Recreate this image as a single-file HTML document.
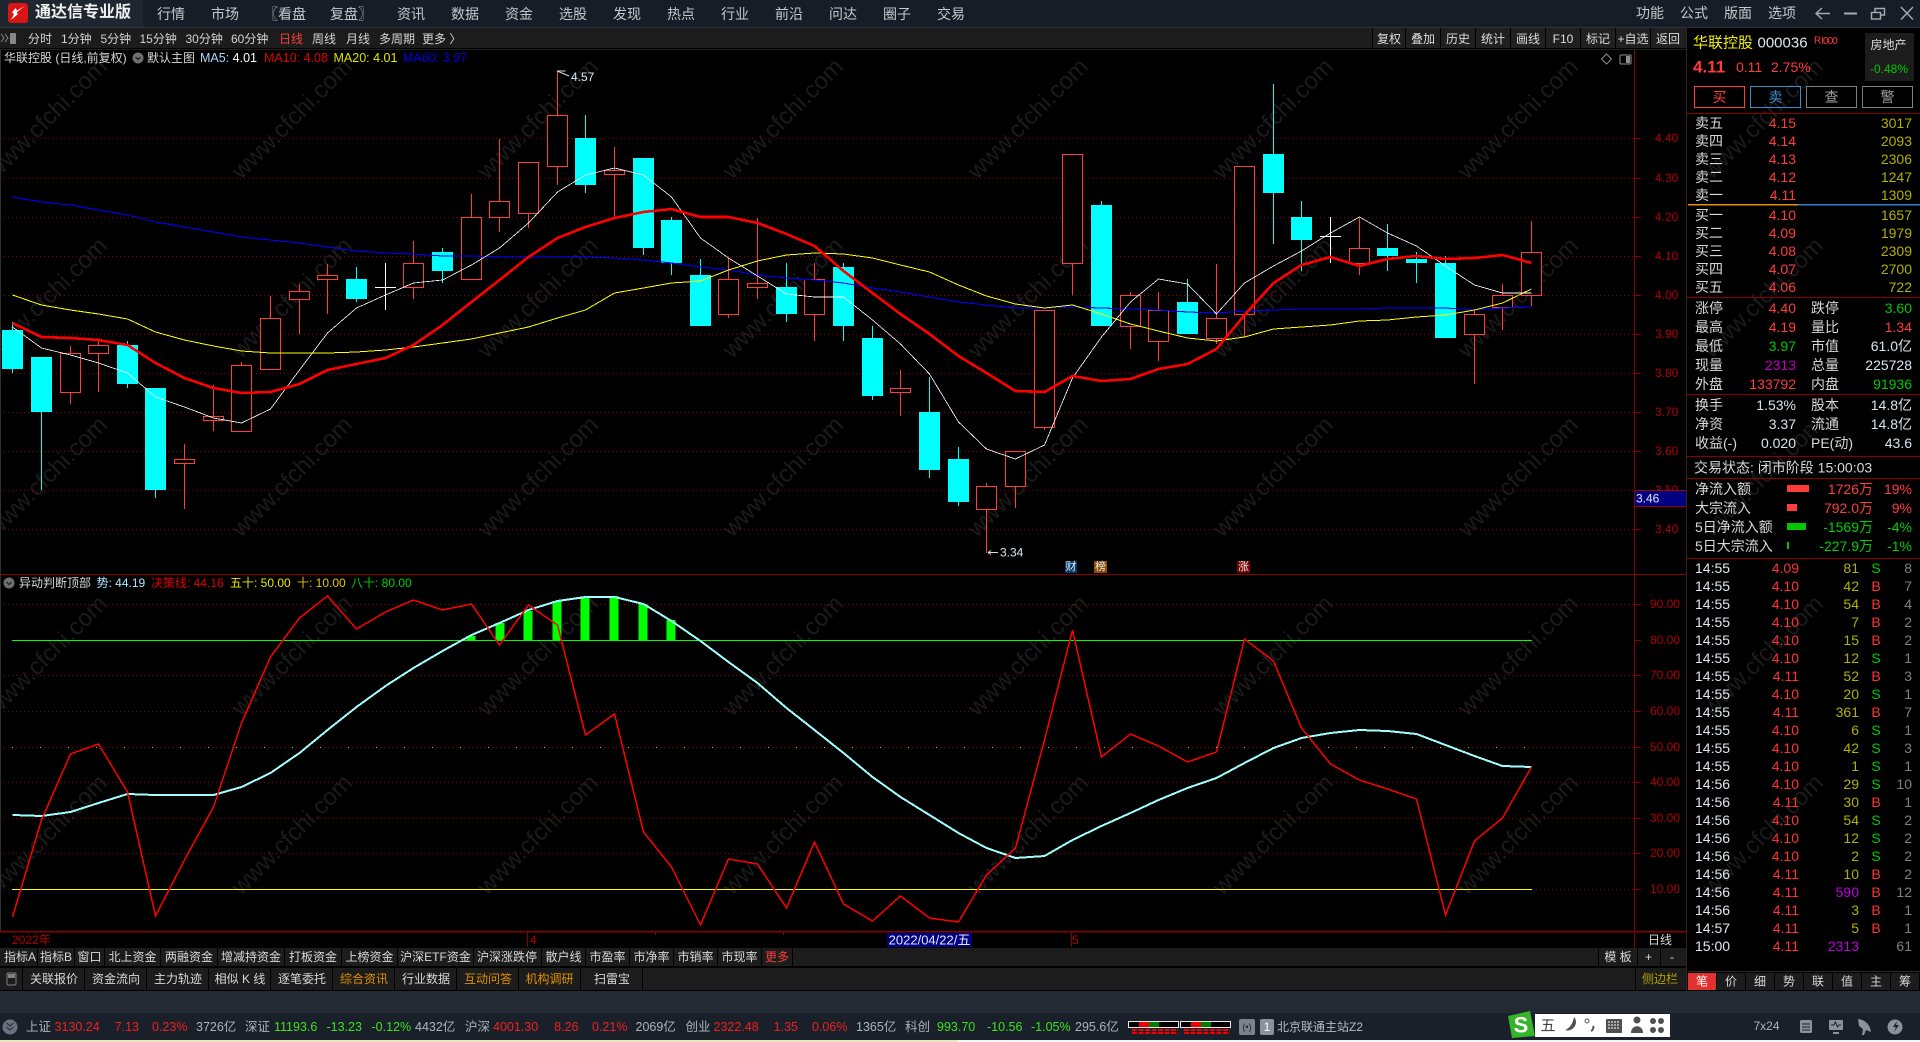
<!DOCTYPE html>
<html lang="zh-CN"><head><meta charset="utf-8"><title>通达信专业版</title>
<style>
html,body{margin:0;padding:0;background:#000;width:1920px;height:1042px;overflow:hidden}
svg{display:block;font-family:"Liberation Sans","Noto Sans CJK SC",sans-serif;font-size:12px}
text{dominant-baseline:central;white-space:pre}
.c{text-anchor:middle}.e{text-anchor:end}
.m text{font-size:14px;fill:#c4c8cc}
.n{fill:none}
.cr{shape-rendering:crispEdges}
</style></head><body>
<svg width="1920" height="1042" viewBox="0 0 1920 1042" xmlns="http://www.w3.org/2000/svg">
<rect width="1920" height="1042" fill="#000"/>

<!-- watermark -->
<g fill="#1b1b1b" font-size="24">
<g id="wm">
<text transform="translate(-9 175) rotate(-45)">www.cfchi.com</text><text transform="translate(236 175) rotate(-45)">www.cfchi.com</text><text transform="translate(482 175) rotate(-45)">www.cfchi.com</text><text transform="translate(727 175) rotate(-45)">www.cfchi.com</text><text transform="translate(972 175) rotate(-45)">www.cfchi.com</text><text transform="translate(1217 175) rotate(-45)">www.cfchi.com</text><text transform="translate(1462 175) rotate(-45)">www.cfchi.com</text><text transform="translate(1707 175) rotate(-45)">www.cfchi.com</text>
<text transform="translate(-9 354) rotate(-45)">www.cfchi.com</text><text transform="translate(236 354) rotate(-45)">www.cfchi.com</text><text transform="translate(482 354) rotate(-45)">www.cfchi.com</text><text transform="translate(727 354) rotate(-45)">www.cfchi.com</text><text transform="translate(972 354) rotate(-45)">www.cfchi.com</text><text transform="translate(1217 354) rotate(-45)">www.cfchi.com</text><text transform="translate(1462 354) rotate(-45)">www.cfchi.com</text><text transform="translate(1707 354) rotate(-45)">www.cfchi.com</text>
<text transform="translate(-9 533) rotate(-45)">www.cfchi.com</text><text transform="translate(236 533) rotate(-45)">www.cfchi.com</text><text transform="translate(482 533) rotate(-45)">www.cfchi.com</text><text transform="translate(727 533) rotate(-45)">www.cfchi.com</text><text transform="translate(972 533) rotate(-45)">www.cfchi.com</text><text transform="translate(1217 533) rotate(-45)">www.cfchi.com</text><text transform="translate(1462 533) rotate(-45)">www.cfchi.com</text><text transform="translate(1707 533) rotate(-45)">www.cfchi.com</text>
<text transform="translate(-9 712) rotate(-45)">www.cfchi.com</text><text transform="translate(236 712) rotate(-45)">www.cfchi.com</text><text transform="translate(482 712) rotate(-45)">www.cfchi.com</text><text transform="translate(727 712) rotate(-45)">www.cfchi.com</text><text transform="translate(972 712) rotate(-45)">www.cfchi.com</text><text transform="translate(1217 712) rotate(-45)">www.cfchi.com</text><text transform="translate(1462 712) rotate(-45)">www.cfchi.com</text><text transform="translate(1707 712) rotate(-45)">www.cfchi.com</text>
<text transform="translate(-9 891) rotate(-45)">www.cfchi.com</text><text transform="translate(236 891) rotate(-45)">www.cfchi.com</text><text transform="translate(482 891) rotate(-45)">www.cfchi.com</text><text transform="translate(727 891) rotate(-45)">www.cfchi.com</text><text transform="translate(972 891) rotate(-45)">www.cfchi.com</text><text transform="translate(1217 891) rotate(-45)">www.cfchi.com</text><text transform="translate(1462 891) rotate(-45)">www.cfchi.com</text><text transform="translate(1707 891) rotate(-45)">www.cfchi.com</text>
</g></g>

<!-- grid main -->
<g class="cr">
<path d="M0 138.5H1634M0 178.5H1634M0 217.5H1634M0 256.5H1634M0 295.5H1634M0 334.5H1634M0 373.5H1634M0 412.5H1634M0 451.5H1634M0 490.5H1634M0 529.5H1634" stroke="#8a0000" stroke-dasharray="1 3" fill="none"/>
<path d="M0 604.5H1634M0 675.5H1634M0 711.5H1634M0 747.5H1634M0 782.5H1634M0 818.5H1634M0 853.5H1634M0 889.5H1634" stroke="#8a0000" stroke-dasharray="1 3" fill="none"/>
<path d="M0.5 50V932" stroke="#303030"/>
<path d="M1634.5 50V948" stroke="#8a0000" fill="none"/>
<path d="M1634 138.5h7M1634 178.5h7M1634 217.5h7M1634 256.5h7M1634 295.5h7M1634 334.5h7M1634 373.5h7M1634 412.5h7M1634 451.5h7M1634 490.5h7M1634 529.5h7M1634 604.5h7M1634 640.5h7M1634 675.5h7M1634 711.5h7M1634 747.5h7M1634 782.5h7M1634 818.5h7M1634 853.5h7M1634 889.5h7" stroke="#8a0000"/>
</g>

<!-- candles red -->
<g stroke="#ff3c3c" fill="#000" class="cr">
<path d="M70.5 346V404"/><rect x="60.5" y="353.5" width="20" height="39"/>
<path d="M98.5 340V392"/><rect x="88.5" y="345.5" width="20" height="8"/>
<path d="M184.5 444V509"/><rect x="174.5" y="459.5" width="20" height="4"/>
<path d="M213.5 385V431"/><rect x="203.5" y="416.5" width="20" height="4"/>
<path d="M241.5 362V432"/><rect x="231.5" y="365.5" width="20" height="66"/>
<path d="M270.5 296V370"/><rect x="260.5" y="318.5" width="20" height="51"/>
<path d="M299.5 284V334"/><rect x="289.5" y="291.5" width="20" height="8"/>
<path d="M327.5 264V314"/><rect x="317.5" y="275.5" width="20" height="4"/>
<path d="M413.5 241V299"/><rect x="403.5" y="263.5" width="20" height="24"/>
<path d="M471.5 194V280"/><rect x="461.5" y="217.5" width="20" height="62"/>
<path d="M499.5 139V232"/><rect x="489.5" y="201.5" width="20" height="16"/>
<path d="M528.5 162V228"/><rect x="518.5" y="162.5" width="20" height="51"/>
<path d="M557.5 71V185"/><rect x="547.5" y="115.5" width="20" height="51"/>
<path d="M614.5 147V217"/><rect x="604.5" y="170.5" width="20" height="4"/>
<path d="M728.5 258V318"/><rect x="718.5" y="279.5" width="20" height="35"/>
<path d="M757.5 218V299"/><rect x="747.5" y="283.5" width="20" height="4"/>
<path d="M814.5 263V341"/><rect x="804.5" y="279.5" width="20" height="35"/>
<path d="M900.5 370V416"/><rect x="890.5" y="388.5" width="20" height="4"/>
<path d="M986.5 483V553"/><rect x="976.5" y="486.5" width="20" height="23"/>
<path d="M1015.5 451V508"/><rect x="1005.5" y="451.5" width="20" height="35"/>
<path d="M1044.5 310V430"/><rect x="1034.5" y="310.5" width="20" height="117"/>
<path d="M1072.5 155V295"/><rect x="1062.5" y="154.5" width="20" height="109"/>
<path d="M1130.5 292V349"/><rect x="1120.5" y="295.5" width="20" height="31"/>
<path d="M1158.5 292V361"/><rect x="1148.5" y="310.5" width="20" height="31"/>
<path d="M1216.5 264V344"/><rect x="1206.5" y="318.5" width="20" height="20"/>
<path d="M1244.5 166V337"/><rect x="1234.5" y="166.5" width="20" height="148"/>
<path d="M1359.5 218V275"/><rect x="1349.5" y="248.5" width="20" height="15"/>
<path d="M1474.5 310V384"/><rect x="1464.5" y="314.5" width="20" height="20"/>
<path d="M1502.5 284V330"/><rect x="1492.5" y="295.5" width="20" height="12"/>
<path d="M1531.5 221V306"/><rect x="1521.5" y="252.5" width="20" height="43"/>
</g>
<!-- candles cyan -->
<g stroke="#00ffff" fill="#00ffff" class="cr">
<path d="M12.5 322V373"/><rect x="2.5" y="330.5" width="20" height="38"/>
<path d="M41.5 357V490"/><rect x="31.5" y="357.5" width="20" height="54"/>
<path d="M127.5 341V388"/><rect x="117.5" y="345.5" width="20" height="38"/>
<path d="M155.5 388V498"/><rect x="145.5" y="388.5" width="20" height="101"/>
<path d="M356.5 267V302"/><rect x="346.5" y="279.5" width="20" height="19"/>
<path d="M442.5 248V283"/><rect x="432.5" y="252.5" width="20" height="18"/>
<path d="M585.5 115V193"/><rect x="575.5" y="138.5" width="20" height="46"/>
<path d="M643.5 158V255"/><rect x="633.5" y="158.5" width="20" height="89"/>
<path d="M671.5 217V275"/><rect x="661.5" y="220.5" width="20" height="42"/>
<path d="M700.5 259V326"/><rect x="690.5" y="275.5" width="20" height="50"/>
<path d="M786.5 263V322"/><rect x="776.5" y="287.5" width="20" height="26"/>
<path d="M843.5 263V341"/><rect x="833.5" y="267.5" width="20" height="58"/>
<path d="M872.5 326V400"/><rect x="862.5" y="338.5" width="20" height="57"/>
<path d="M929.5 377V478"/><rect x="919.5" y="412.5" width="20" height="57"/>
<path d="M958.5 447V506"/><rect x="948.5" y="459.5" width="20" height="42"/>
<path d="M1101.5 201V326"/><rect x="1091.5" y="205.5" width="20" height="120"/>
<path d="M1187.5 279V334"/><rect x="1177.5" y="302.5" width="20" height="31"/>
<path d="M1273.5 84V244"/><rect x="1263.5" y="154.5" width="20" height="38"/>
<path d="M1301.5 201V271"/><rect x="1291.5" y="217.5" width="20" height="22"/>
<path d="M1387.5 224V271"/><rect x="1377.5" y="248.5" width="20" height="7"/>
<path d="M1416.5 252V283"/><rect x="1406.5" y="259.5" width="20" height="3"/>
<path d="M1445.5 256V338"/><rect x="1435.5" y="263.5" width="20" height="74"/>
</g>
<!-- doji -->
<g stroke="#fff" class="cr"><path d="M385.5 263V310M375 287.5h21M1330.5 217V263M1320 236.5h21"/></g>

<!-- MA lines -->
<g class="n cr">
<polyline stroke="#0000ff" stroke-width="1.05" points="12.5,197 41.5,202 70.5,205 98.5,210 127.5,215 155.5,222 184.5,227 213.5,232 241.5,237 270.5,240 299.5,243 327.5,247 356.5,251 385.5,253 413.5,254 442.5,256 471.5,256 499.5,257 528.5,257 557.5,257 585.5,257 614.5,258 643.5,260 671.5,263 700.5,267 728.5,270 757.5,275 786.5,278 814.5,280 843.5,283 872.5,288 900.5,292 929.5,297 958.5,302 986.5,305 1015.5,308 1044.5,308 1072.5,307 1101.5,308 1130.5,309 1158.5,310 1187.5,312 1216.5,313 1244.5,311 1273.5,310 1301.5,309 1330.5,309 1359.5,309 1387.5,308 1416.5,308 1445.5,308 1474.5,310 1502.5,308 1531.5,307"/>
<polyline stroke="#ffff00" stroke-width="1" points="12.5,295 41.5,305 70.5,310 98.5,314 127.5,319 155.5,332 184.5,340 213.5,346 241.5,351 270.5,353 299.5,353 327.5,353 356.5,352 385.5,350 413.5,347 442.5,343 471.5,339 499.5,333 528.5,327 557.5,318 585.5,310 614.5,293 643.5,288 671.5,283 700.5,281 728.5,270 757.5,261 786.5,255 814.5,253 843.5,254 872.5,258 900.5,265 929.5,272 958.5,285 986.5,296 1015.5,304 1044.5,308 1072.5,305 1101.5,314 1130.5,324 1158.5,331 1187.5,338 1216.5,341 1244.5,337 1273.5,329 1301.5,327 1330.5,325 1359.5,321 1387.5,320 1416.5,317 1445.5,315 1474.5,310 1502.5,303 1531.5,289"/>
<polyline stroke="#ffffff" stroke-width="0.8" points="12.5,327 41.5,348 70.5,355 98.5,363 127.5,373 155.5,397 184.5,407 213.5,418 241.5,423 270.5,409 299.5,370 327.5,333 356.5,308 385.5,295 413.5,283 442.5,280 471.5,265 499.5,248 528.5,223 557.5,192 585.5,175 614.5,168 643.5,175 671.5,197 700.5,238 728.5,258 757.5,276 786.5,294 814.5,297 843.5,297 872.5,320 900.5,344 929.5,374 958.5,422 986.5,449 1015.5,459 1044.5,445 1072.5,378 1101.5,337 1130.5,302 1158.5,279 1187.5,284 1216.5,314 1244.5,283 1273.5,266 1301.5,251 1330.5,233 1359.5,217 1387.5,233 1416.5,246 1445.5,266 1474.5,285 1502.5,293 1531.5,293"/>
<polyline stroke="#ff0000" stroke-width="2.6" points="12.5,323 41.5,337 70.5,338 98.5,340 127.5,345 155.5,363 184.5,378 213.5,388 241.5,393 270.5,392 299.5,384 327.5,370 356.5,364 385.5,358 413.5,345 442.5,325 471.5,302 499.5,280 528.5,257 557.5,238 585.5,227 614.5,218 643.5,212 671.5,209 700.5,217 728.5,217 757.5,223 786.5,234 814.5,246 843.5,271 872.5,293 900.5,314 929.5,334 958.5,356 986.5,373 1015.5,391 1044.5,392 1072.5,376 1101.5,381 1130.5,379 1158.5,369 1187.5,364 1216.5,349 1244.5,315 1273.5,283 1301.5,265 1330.5,257 1359.5,266 1387.5,259 1416.5,256 1445.5,259 1474.5,258 1502.5,255 1531.5,263"/>
</g>

<!-- price marks -->
<g fill="none" stroke="#d8d8d8"><path d="M557.5 71l8 0M557 71l12 5"/><path d="M988 552.5h10M988 552.5l3-2M988 552.5l3 2"/></g>
<text x="571" y="77" fill="#d8e4ec" font-size="12">4.57</text>
<text x="1000" y="552.5" fill="#d8e4ec" font-size="12">3.34</text>
<g font-size="11">
<rect x="1065" y="561" width="12" height="12" fill="#003a6c"/><text x="1071" y="567" class="c" fill="#e8e8e8">财</text>
<rect x="1094" y="561" width="13" height="12" fill="#8c4a00"/><text x="1100.5" y="567" class="c" fill="#e8e8e8">榜</text>
<rect x="1237" y="561" width="13" height="12" fill="#7a0000"/><text x="1243.5" y="567" class="c" fill="#e8e8e8">涨</text>
</g>

<!-- axis labels -->
<g fill="#b00000" font-size="12">
<text x="1655" y="138">4.40</text><text x="1655" y="178">4.30</text><text x="1655" y="217">4.20</text><text x="1655" y="256">4.10</text><text x="1655" y="295">4.00</text><text x="1655" y="334">3.90</text><text x="1655" y="373">3.80</text><text x="1655" y="412">3.70</text><text x="1655" y="451">3.60</text><text x="1655" y="490">3.50</text><text x="1655" y="529">3.40</text>
<text x="1650" y="604">90.00</text><text x="1650" y="640">80.00</text><text x="1650" y="675">70.00</text><text x="1650" y="711">60.00</text><text x="1650" y="747">50.00</text><text x="1650" y="782">40.00</text><text x="1650" y="818">30.00</text><text x="1650" y="853">20.00</text><text x="1650" y="889">10.00</text>
</g>
<rect x="1635" y="491" width="51" height="15" fill="#000080"/><path d="M1635 490.5h51M1635 506.5h51" stroke="#a00000"/><text x="1636" y="498.5" fill="#dfe8ff" font-size="12">3.46</text>
<path d="M1606.5 54l5 5-5 5-5-5z" fill="none" stroke="#909090"/><rect x="1620" y="55" width="11" height="9" rx="1" fill="none" stroke="#909090"/><rect x="1626" y="56" width="4" height="7" fill="#909090"/>

<!-- dividers -->
<path d="M0 574.5H1686" stroke="#8a0000" class="cr"/>
<path d="M0 931.5H1686" stroke="#8a0000" stroke-width="1.5" class="cr"/>
<path d="M527.5 932V947M1071.5 932V947M655.5 932v3M783.5 932v3" stroke="#8a0000" class="cr"/>

<!-- indicator -->
<g class="cr">
<g fill="#00ff00"><rect x="466.5" y="636" width="9" height="5"/><rect x="495.5" y="623" width="9" height="18"/><rect x="523.5" y="611" width="9" height="30"/><rect x="552.5" y="601" width="9" height="40"/><rect x="580.5" y="597" width="9" height="44"/><rect x="609.5" y="596" width="9" height="45"/><rect x="638.5" y="604" width="9" height="37"/><rect x="666.5" y="620" width="9" height="21"/></g>
<path d="M12 640.5H1532" stroke="#00ff00" stroke-width="1.4"/>
<path d="M12 889.5H1532" stroke="#ffff00" stroke-width="1.4"/>
<path d="M12 747.5H1532" stroke="#e8c000" stroke-dasharray="1 27" />
<g class="n">
<polyline stroke="#9fffff" stroke-width="2" points="12.5,815 41.5,816 70.5,812 98.5,803 127.5,794 155.5,795 184.5,795 213.5,795 241.5,787 270.5,773 299.5,753 327.5,730 356.5,707 385.5,686 413.5,668 442.5,651 471.5,635 499.5,623 528.5,610 557.5,601 585.5,597 614.5,597 643.5,604 671.5,621 700.5,641 728.5,662 757.5,683 786.5,708 814.5,730 843.5,753 872.5,777 900.5,797 929.5,815 958.5,833 986.5,848 1015.5,858 1044.5,856 1072.5,840 1101.5,826 1130.5,813 1158.5,800 1187.5,788 1216.5,778 1244.5,763 1273.5,748 1301.5,738 1330.5,733 1359.5,730 1387.5,731 1416.5,734 1445.5,745 1474.5,756 1502.5,766 1531.5,767"/>
<polyline stroke="#ff0000" stroke-width="1.5" points="12.5,917 41.5,820 70.5,754 98.5,744 127.5,792 155.5,916 184.5,860 213.5,807 241.5,723 270.5,657 299.5,618 327.5,596 356.5,629 385.5,612 413.5,600 442.5,610 471.5,604 499.5,645 528.5,605 557.5,625 585.5,735 614.5,714 643.5,832 671.5,867 700.5,925 728.5,859 757.5,864 786.5,908 814.5,842 843.5,904 872.5,921 900.5,896 929.5,918 958.5,922 986.5,875 1015.5,848 1044.5,740 1072.5,630 1101.5,757 1130.5,734 1158.5,746 1187.5,762 1216.5,752 1244.5,639 1273.5,661 1301.5,728 1330.5,764 1359.5,780 1387.5,789 1416.5,799 1445.5,915 1474.5,841 1502.5,818 1531.5,767"/>
</g></g>

<!-- chart legends -->
<text x="4" y="58" fill="#d8d8d8">华联控股 (日线,前复权)</text>
<circle cx="138" cy="58" r="5.5" fill="#707070"/><path d="M135.500 57l2.500 2.500 2.500-2.500" fill="none" stroke="#111"/>
<text x="147" y="58" fill="#d8d8d8">默认主图</text>
<text x="200" y="58" font-size="12.500"><tspan fill="#a8d8ff">MA5:</tspan><tspan fill="#fff"> 4.01</tspan></text>
<text x="264" y="58" fill="#e00000" font-size="12.500">MA10: 4.08</text>
<text x="333.500" y="58" font-size="12.500"><tspan fill="#d8e000">MA20:</tspan><tspan fill="#e8e800"> 4.01</tspan></text>
<text x="403" y="58" fill="#0000e0" font-size="12.500">MA60: 3.97</text>

<circle cx="9" cy="583" r="5.500" fill="#707070"/><path d="M6.500 582l2.500 2.500 2.500-2.500" fill="none" stroke="#111"/>
<text x="19" y="583" fill="#d8d8d8">异动判断顶部</text>
<text x="96.500" y="583"><tspan fill="#a8e8ff">势: 44.19</tspan></text>
<text x="151" y="583" fill="#e00000">决策线: 44.16</text>
<text x="230" y="583" fill="#e8e800">五十: 50.00</text>
<text x="297" y="583" fill="#e0c800">十: 10.00</text>
<text x="351" y="583" fill="#00d000">八十: 80.00</text>

<!-- date row -->
<text x="12" y="940" fill="#b00000">2022年</text><text x="530" y="940" fill="#b00000">4</text><text x="1072" y="940" fill="#b00000">5</text>
<rect x="887" y="933" width="85" height="14" fill="#000080"/><text x="929.500" y="940" class="c" fill="#e0e8ff" font-size="13">2022/04/22/五</text>
<text x="1648" y="940" fill="#d8d8d8">日线</text>

<!-- title bar -->
<rect width="1920" height="27" fill="#171d27"/>
<rect width="143" height="27" fill="#1f2630"/>
<path d="M0 27.500H1920" stroke="#2e343c"/>
<rect x="8" y="3" width="20" height="20" rx="3" fill="#d81414"/>
<path d="M25 6L17 10.500L15.500 8L12 12.500L14 14L11 20L18 14L16.500 12.500Z" fill="#fff"/>
<text x="35" y="12.500" font-size="16" font-weight="700" fill="#f0f0f0">通达信专业版</text>
<g class="m">
<text x="157" y="14">行情</text><text x="211" y="14">市场</text><text x="306" y="14" class="e">〖看盘</text><text x="330" y="14">复盘〗</text><text x="397" y="14">资讯</text><text x="451" y="14">数据</text><text x="505" y="14">资金</text><text x="559" y="14">选股</text><text x="613" y="14">发现</text><text x="667" y="14">热点</text><text x="721" y="14">行业</text><text x="775" y="14">前沿</text><text x="829" y="14">问达</text><text x="883" y="14">圈子</text><text x="937" y="14">交易</text>
<text x="1636" y="13">功能</text><text x="1680" y="13">公式</text><text x="1724" y="13">版面</text><text x="1768" y="13">选项</text>
</g>
<g fill="none" stroke="#a8acb0" stroke-width="1.400"><path d="M1830 13.500H1816M1822 8l-6 5.500 6 5.500"/><path d="M1844 13.500h13" stroke-width="2"/><rect x="1871.500" y="12.500" width="9" height="6.500"/><path d="M1875 12V8.500h9.500v6.500H1881"/><path d="M1901 7l12 12.500M1913 7L1901 19.500"/></g>

<!-- toolbar row -->
<rect y="28" width="1686" height="20" fill="#1c1c1c"/>
<rect y="48" width="1686" height="2" fill="#000"/>
<path d="M0 49.500H1686" stroke="#202020"/>
<g fill="#888"><path d="M1 34l3 4-3 4M5 34l3 4-3 4" fill="none" stroke="#888"/><rect x="10" y="33" width="6" height="11" rx="1"/></g>
<g fill="#d4d4d4">
<text x="28" y="39">分时</text><text x="61" y="39">1分钟</text><text x="100.500" y="39">5分钟</text><text x="139.500" y="39">15分钟</text><text x="185.500" y="39">30分钟</text><text x="231" y="39">60分钟</text><text x="279" y="39" fill="#ff3c3c">日线</text><text x="312" y="39">周线</text><text x="346" y="39">月线</text><text x="379" y="39">多周期</text><text x="422" y="39">更多 〉</text>
</g>
<g fill="#202020"><rect x="1373" y="28" width="312" height="20"/></g>
<path d="M1372.500 28v20M1405.500 28v20M1440.500 28v20M1475.500 28v20M1510.500 28v20M1545.500 28v20M1580.500 28v20M1615.500 28v20M1650.500 28v20" stroke="#000"/>
<g fill="#dcdcdc" class="cc">
<text x="1389" y="39" class="c">复权</text><text x="1423" y="39" class="c">叠加</text><text x="1458" y="39" class="c">历史</text><text x="1493" y="39" class="c">统计</text><text x="1528" y="39" class="c">画线</text><text x="1563" y="39" class="c">F10</text><text x="1598" y="39" class="c">标记</text><text x="1633" y="39" class="c">+自选</text><text x="1668" y="39" class="c">返回</text>
</g>

<!-- right panel -->
<path d="M1686.500 28V991" stroke="#3a2020" class="cr"/>
<text x="1693" y="43" font-size="15" fill="#f0f000">华联控股</text>
<text x="1757.500" y="43" font-size="15" fill="#dfe8ee">000036</text>
<text x="1814" y="41" font-size="10" fill="#ff3c3c">R<tspan letter-spacing="-1">I000</tspan></text>
<text x="1693" y="67" font-size="17" font-weight="700" fill="#ff3c3c">4.11</text>
<text x="1736" y="67" font-size="14" fill="#ff3c3c">0.11</text>
<text x="1771" y="67" font-size="14" fill="#ff3c3c">2.75%</text>
<rect x="1865" y="33" width="49" height="48" fill="#1c1c1c"/>
<text x="1888.500" y="45" class="c" fill="#dcdcdc">房地产</text>
<text x="1889" y="69" class="c" fill="#00c800">-0.48%</text>
<g fill="none" class="cr"><rect x="1694.500" y="86.500" width="50" height="21" stroke="#ff3c3c"/><rect x="1750.500" y="86.500" width="50" height="21" stroke="#3c8ccc"/><rect x="1806.500" y="86.500" width="50" height="21" stroke="#808080"/><rect x="1862.500" y="86.500" width="50" height="21" stroke="#808080"/></g>
<g font-size="14"><text x="1719.500" y="97" class="c" fill="#ff3c3c">买</text><text x="1775.500" y="97" class="c" fill="#3c8ccc">卖</text><text x="1831.500" y="97" class="c" fill="#a0a0a0">查</text><text x="1887.500" y="97" class="c" fill="#a0a0a0">警</text></g>
<g stroke="#8a0000" class="cr"><path d="M1687 113.500H1920M1687 297.500H1920M1687 394.500H1920M1687 456.500H1920M1687 478.500H1920M1687 558.500H1920"/></g>
<rect x="1688" y="204" width="110" height="1.500" fill="#e09010"/><rect x="1798" y="204" width="122" height="1.500" fill="#2c80d0"/>

<g font-size="14" fill="#d8d8d8">
<text x="1695" y="123">卖五</text><text x="1695" y="141">卖四</text><text x="1695" y="159">卖三</text><text x="1695" y="177">卖二</text><text x="1695" y="195">卖一</text>
<text x="1695" y="215">买一</text><text x="1695" y="233">买二</text><text x="1695" y="251">买三</text><text x="1695" y="269">买四</text><text x="1695" y="287">买五</text>
<text x="1695" y="308">涨停</text><text x="1695" y="327">最高</text><text x="1695" y="346">最低</text><text x="1695" y="365">现量</text><text x="1695" y="384">外盘</text>
<text x="1811" y="308">跌停</text><text x="1811" y="327">量比</text><text x="1811" y="346">市值</text><text x="1811" y="365">总量</text><text x="1811" y="384">内盘</text>
<text x="1695" y="405">换手</text><text x="1695" y="424">净资</text><text x="1695" y="443">收益(-)</text>
<text x="1811" y="405">股本</text><text x="1811" y="424">流通</text><text x="1811" y="443">PE(动)</text>
<text x="1694" y="467.500">交易状态: 闭市阶段 15:00:03</text>
<text x="1695" y="489">净流入额</text><text x="1695" y="508">大宗流入</text><text x="1695" y="527">5日净流入额</text><text x="1695" y="546">5日大宗流入</text>
</g>
<g font-size="14" fill="#ff3c3c" class="e">
<g class="e"><text x="1796" y="123" class="e">4.15</text><text x="1796" y="141" class="e">4.14</text><text x="1796" y="159" class="e">4.13</text><text x="1796" y="177" class="e">4.12</text><text x="1796" y="195" class="e">4.11</text><text x="1796" y="215" class="e">4.10</text><text x="1796" y="233" class="e">4.09</text><text x="1796" y="251" class="e">4.08</text><text x="1796" y="269" class="e">4.07</text><text x="1796" y="287" class="e">4.06</text><text x="1796" y="308" class="e">4.40</text><text x="1796" y="327" class="e">4.19</text><text x="1796" y="384" class="e">133792</text><text x="1912" y="327" class="e">1.34</text></g>
<g fill="#b0b000"><text x="1912" y="123" class="e">3017</text><text x="1912" y="141" class="e">2093</text><text x="1912" y="159" class="e">2306</text><text x="1912" y="177" class="e">1247</text><text x="1912" y="195" class="e">1309</text><text x="1912" y="215" class="e">1657</text><text x="1912" y="233" class="e">1979</text><text x="1912" y="251" class="e">2309</text><text x="1912" y="269" class="e">2700</text><text x="1912" y="287" class="e">722</text></g>
<g fill="#00c800"><text x="1912" y="308" class="e">3.60</text><text x="1796" y="346" class="e">3.97</text><text x="1912" y="384" class="e">91936</text></g>
<text x="1796" y="365" class="e" fill="#c000c0">2313</text>
<g fill="#d8e4ec"><text x="1912" y="346" class="e">61.0亿</text><text x="1912" y="365" class="e">225728</text><text x="1796" y="405" class="e">1.53%</text><text x="1912" y="405" class="e">14.8亿</text><text x="1796" y="424" class="e">3.37</text><text x="1912" y="424" class="e">14.8亿</text><text x="1796" y="443" class="e">0.020</text><text x="1912" y="443" class="e">43.6</text></g>
<text x="1873" y="489" class="e">1726万</text><text x="1912" y="489" class="e">19%</text><text x="1873" y="508" class="e">792.0万</text><text x="1912" y="508" class="e">9%</text>
<g fill="#00d000"><text x="1873" y="527" class="e">-1569万</text><text x="1912" y="527" class="e">-4%</text><text x="1873" y="546" class="e">-227.9万</text><text x="1912" y="546" class="e">-1%</text></g>
</g>
<rect x="1787" y="485" width="22" height="7" fill="#ff3c3c"/><rect x="1787" y="504" width="10" height="7" fill="#ff3c3c"/><rect x="1787" y="523" width="19" height="7" fill="#00c800"/><rect x="1787" y="542" width="2" height="7" fill="#00c800"/>

<!-- ticks -->
<g font-size="14">
<g fill="#dfe8ee"><text x="1695" y="568">14:55</text><text x="1695" y="586">14:55</text><text x="1695" y="604">14:55</text><text x="1695" y="622">14:55</text><text x="1695" y="640">14:55</text><text x="1695" y="658">14:55</text><text x="1695" y="676">14:55</text><text x="1695" y="694">14:55</text><text x="1695" y="712">14:55</text><text x="1695" y="730">14:55</text><text x="1695" y="748">14:55</text><text x="1695" y="766">14:55</text><text x="1695" y="784">14:56</text><text x="1695" y="802">14:56</text><text x="1695" y="820">14:56</text><text x="1695" y="838">14:56</text><text x="1695" y="856">14:56</text><text x="1695" y="874">14:56</text><text x="1695" y="892">14:56</text><text x="1695" y="910">14:56</text><text x="1695" y="928">14:57</text><text x="1695" y="946">15:00</text></g>
<g fill="#ff3232"><text x="1799" y="568" class="e">4.09</text><text x="1799" y="586" class="e">4.10</text><text x="1799" y="604" class="e">4.10</text><text x="1799" y="622" class="e">4.10</text><text x="1799" y="640" class="e">4.10</text><text x="1799" y="658" class="e">4.10</text><text x="1799" y="676" class="e">4.11</text><text x="1799" y="694" class="e">4.10</text><text x="1799" y="712" class="e">4.11</text><text x="1799" y="730" class="e">4.10</text><text x="1799" y="748" class="e">4.10</text><text x="1799" y="766" class="e">4.10</text><text x="1799" y="784" class="e">4.10</text><text x="1799" y="802" class="e">4.11</text><text x="1799" y="820" class="e">4.10</text><text x="1799" y="838" class="e">4.10</text><text x="1799" y="856" class="e">4.10</text><text x="1799" y="874" class="e">4.11</text><text x="1799" y="892" class="e">4.11</text><text x="1799" y="910" class="e">4.11</text><text x="1799" y="928" class="e">4.11</text><text x="1799" y="946" class="e">4.11</text></g>
<g fill="#b0b000"><text x="1859" y="568" class="e">81</text><text x="1859" y="586" class="e">42</text><text x="1859" y="604" class="e">54</text><text x="1859" y="622" class="e">7</text><text x="1859" y="640" class="e">15</text><text x="1859" y="658" class="e">12</text><text x="1859" y="676" class="e">52</text><text x="1859" y="694" class="e">20</text><text x="1859" y="712" class="e">361</text><text x="1859" y="730" class="e">6</text><text x="1859" y="748" class="e">42</text><text x="1859" y="766" class="e">1</text><text x="1859" y="784" class="e">29</text><text x="1859" y="802" class="e">30</text><text x="1859" y="820" class="e">54</text><text x="1859" y="838" class="e">12</text><text x="1859" y="856" class="e">2</text><text x="1859" y="874" class="e">10</text><text x="1859" y="892" class="e" fill="#c000e0">590</text><text x="1859" y="910" class="e">3</text><text x="1859" y="928" class="e">5</text><text x="1859" y="946" class="e" fill="#c000e0">2313</text></g>
<g fill="#00c800"><text x="1876" y="568" class="c">S</text><text x="1876" y="658" class="c">S</text><text x="1876" y="694" class="c">S</text><text x="1876" y="730" class="c">S</text><text x="1876" y="748" class="c">S</text><text x="1876" y="766" class="c">S</text><text x="1876" y="784" class="c">S</text><text x="1876" y="820" class="c">S</text><text x="1876" y="838" class="c">S</text><text x="1876" y="856" class="c">S</text></g>
<g fill="#ff3232"><text x="1876" y="586" class="c">B</text><text x="1876" y="604" class="c">B</text><text x="1876" y="622" class="c">B</text><text x="1876" y="640" class="c">B</text><text x="1876" y="676" class="c">B</text><text x="1876" y="712" class="c">B</text><text x="1876" y="802" class="c">B</text><text x="1876" y="874" class="c">B</text><text x="1876" y="892" class="c">B</text><text x="1876" y="910" class="c">B</text><text x="1876" y="928" class="c">B</text></g>
<g fill="#808080"><text x="1912" y="568" class="e">8</text><text x="1912" y="586" class="e">7</text><text x="1912" y="604" class="e">4</text><text x="1912" y="622" class="e">2</text><text x="1912" y="640" class="e">2</text><text x="1912" y="658" class="e">1</text><text x="1912" y="676" class="e">3</text><text x="1912" y="694" class="e">1</text><text x="1912" y="712" class="e">7</text><text x="1912" y="730" class="e">1</text><text x="1912" y="748" class="e">3</text><text x="1912" y="766" class="e">1</text><text x="1912" y="784" class="e">10</text><text x="1912" y="802" class="e">1</text><text x="1912" y="820" class="e">2</text><text x="1912" y="838" class="e">2</text><text x="1912" y="856" class="e">2</text><text x="1912" y="874" class="e">2</text><text x="1912" y="892" class="e">12</text><text x="1912" y="910" class="e">1</text><text x="1912" y="928" class="e">1</text><text x="1912" y="946" class="e">61</text></g>
</g>

<!-- right tabs -->
<path d="M1687 971.500H1920" stroke="#2a2a2a"/>
<g fill="#1c1c1c"><rect x="1688" y="973" width="28" height="17" fill="#e03030"/><rect x="1717" y="973" width="28" height="17"/><rect x="1746" y="973" width="28" height="17"/><rect x="1775" y="973" width="28" height="17"/><rect x="1804" y="973" width="28" height="17"/><rect x="1833" y="973" width="28" height="17"/><rect x="1862" y="973" width="28" height="17"/><rect x="1891" y="973" width="28" height="17"/></g>
<g fill="#d8d8d8"><text x="1702" y="981.500" class="c" fill="#fff">笔</text><text x="1731" y="981.500" class="c">价</text><text x="1760" y="981.500" class="c">细</text><text x="1789" y="981.500" class="c">势</text><text x="1818" y="981.500" class="c">联</text><text x="1847" y="981.500" class="c">值</text><text x="1876" y="981.500" class="c">主</text><text x="1905" y="981.500" class="c">筹</text></g>

<!-- bottom tabs 1 -->
<rect y="948" width="1686" height="18" fill="#1c1c1c"/>
<path d="M37.500 948v18M74.500 948v18M104.500 948v18M160.500 948v18M217.500 948v18M284.500 948v18M341.500 948v18M397.500 948v18M473.500 948v18M541.500 948v18M585.500 948v18M629.500 948v18M673.500 948v18M717.500 948v18M761.500 948v18M792.500 948v18M1598.500 948v18M1637.500 948v18M1660.500 948v18" stroke="#000"/>
<g fill="#d8d8d8">
<text x="20" y="957" class="c">指标A</text><text x="56" y="957" class="c">指标B</text><text x="89.500" y="957" class="c">窗口</text><text x="132.500" y="957" class="c">北上资金</text><text x="189" y="957" class="c">两融资金</text><text x="251" y="957" class="c">增减持资金</text><text x="313" y="957" class="c">打板资金</text><text x="369.500" y="957" class="c">上榜资金</text><text x="435.500" y="957" class="c">沪深ETF资金</text><text x="507" y="957" class="c">沪深涨跌停</text><text x="563.500" y="957" class="c">散户线</text><text x="607.500" y="957" class="c">市盈率</text><text x="651.500" y="957" class="c">市净率</text><text x="695.500" y="957" class="c">市销率</text><text x="739.500" y="957" class="c">市现率</text><text x="777" y="957" class="c" fill="#ff3c3c">更多</text>
<text x="1618" y="957" class="c">模 板</text><text x="1648.500" y="957" class="c">+</text><text x="1672" y="957" class="c">-</text>
</g>
<!-- bottom tabs 2 -->
<rect y="966" width="1686" height="2" fill="#000"/>
<rect y="968" width="1686" height="22" fill="#1c1c1c"/>
<rect y="990" width="1686" height="1" fill="#000"/>
<path d="M22.500 968v22M84.500 968v22M146.500 968v22M208.500 968v22M270.500 968v22M332.500 968v22M394.500 968v22M456.500 968v22M518.500 968v22M580.500 968v22M642.500 968v22M1635.500 968v22" stroke="#000"/>
<rect x="7" y="973" width="9" height="12" rx="1.500" fill="none" stroke="#808080"/><rect x="8" y="974" width="7" height="4" fill="#808080"/>
<g fill="#d8d8d8">
<text x="54" y="979" class="c">关联报价</text><text x="116" y="979" class="c">资金流向</text><text x="178" y="979" class="c">主力轨迹</text><text x="240" y="979" class="c">相似 K 线</text><text x="302" y="979" class="c">逐笔委托</text><text x="364" y="979" class="c" fill="#e09000">综合资讯</text><text x="426" y="979" class="c">行业数据</text><text x="488" y="979" class="c" fill="#e09000">互动问答</text><text x="549.500" y="979" class="c" fill="#e09000">机构调研</text><text x="612" y="979" class="c">扫雷宝</text>
<text x="1660" y="979" class="c" fill="#b0a000">侧边栏</text>
</g>

<!-- footer -->
<rect y="991" width="1920" height="22" fill="#232a34"/>
<rect y="1013" width="1920" height="27" fill="#1a202a"/>
<rect y="1040" width="957" height="2" fill="#e6e6c0"/><rect x="957" y="1040" width="963" height="2" fill="#f4f4f4"/>
<circle cx="10" cy="1027" r="7.500" fill="#6a7280"/><path d="M6.500 1023l3.500 3 3.500-3M6.500 1027l3.500 3 3.500-3" fill="none" stroke="#202630"/>
<g font-size="12.500">
<g fill="#aab4c0"><text x="26" y="1027">上证</text><text x="196" y="1027">3726亿</text><text x="245" y="1027">深证</text><text x="415" y="1027">4432亿</text><text x="465" y="1027">沪深</text><text x="635.500" y="1027">2069亿</text><text x="685.500" y="1027">创业</text><text x="856" y="1027">1365亿</text><text x="905" y="1027">科创</text><text x="1075" y="1027">295.6亿</text></g>
<g fill="#f02020"><text x="54.500" y="1027">3130.24</text><text x="139" y="1027" class="e">7.13</text><text x="152" y="1027">0.23%</text><text x="493" y="1027">4001.30</text><text x="578.500" y="1027" class="e">8.26</text><text x="592" y="1027">0.21%</text><text x="713.500" y="1027">2322.48</text><text x="798" y="1027" class="e">1.35</text><text x="812" y="1027">0.06%</text></g>
<g fill="#40e020"><text x="274" y="1027">11193.6</text><text x="326.500" y="1027">-13.23</text><text x="371.500" y="1027">-0.12%</text><text x="937" y="1027">993.70</text><text x="987" y="1027">-10.56</text><text x="1031" y="1027">-1.05%</text></g>
</g>
<g class="cr">
<g fill="#000" stroke="#e8e8e8"><rect x="1128.500" y="1021.500" width="50" height="6"/><rect x="1180.500" y="1021.500" width="50" height="6"/></g>
<rect x="1139" y="1022" width="10" height="5" fill="#f00000"/><rect x="1149" y="1022" width="10" height="5" fill="#008000"/><rect x="1191" y="1022" width="10" height="5" fill="#f00000"/><rect x="1201" y="1022" width="10" height="5" fill="#008000"/>
<path d="M1132 1030h46M1132 1033h46M1184 1030h46M1184 1033h46" stroke="#f00000" stroke-width="2" stroke-dasharray="5 1.500"/>
</g>
<rect x="1239" y="1019" width="16" height="16" rx="2" fill="#7a828c"/><text x="1247" y="1027" class="c" font-size="9" fill="#1a202a">(•)</text>
<rect x="1260" y="1019" width="14" height="16" rx="2" fill="#8a929c"/><text x="1267" y="1027" class="c" font-size="12" fill="#fff">1</text>
<text x="1277" y="1027" fill="#b4bcc6">北京联通主站Z2</text>
<rect x="1535" y="1014" width="135" height="23" fill="#fff"/>
<path d="M1508 1016L1530 1011L1535 1036L1512 1038Z" fill="#35b52a"/>
<text x="1521" y="1025" class="c" font-size="22" font-weight="700" fill="#fff">S</text>
<text x="1548" y="1026" class="c" font-size="15" fill="#444">五</text>
<path d="M1574 1017c-1 6-4 11-9 13 6 2 11-3 11-8 0-2-1-4-2-5z" fill="#505050"/>
<circle cx="1587" cy="1021" r="2" fill="none" stroke="#505050"/><path d="M1593 1026c1 2 0 4-2 5" fill="none" stroke="#505050" stroke-width="2"/>
<rect x="1606" y="1019" width="16" height="14" rx="1" fill="#505050"/><path d="M1608 1022h12M1608 1025h12M1608 1028h12" stroke="#fff" stroke-dasharray="2 1"/>
<circle cx="1637" cy="1020" r="3.500" fill="#505050"/><path d="M1631 1033c0-9 12-9 12 0z" fill="#505050"/>
<g fill="#505050"><circle cx="1653" cy="1021" r="3"/><circle cx="1661" cy="1021" r="3"/><circle cx="1653" cy="1030" r="3"/><circle cx="1661" cy="1030" r="3"/></g>
<text x="1753.500" y="1026" fill="#aab4c0">7x24</text>
<rect x="1800" y="1020" width="12" height="13" rx="1.500" fill="#8a929c"/><path d="M1802 1024h8M1802 1027h8M1802 1030h8" stroke="#1a202a"/>
<rect x="1829" y="1020" width="14" height="10" rx="1" fill="#8a929c"/><path d="M1831 1025h3l1.500-3 2 5 1.500-2h2" fill="none" stroke="#1a202a"/><path d="M1833 1033h6" stroke="#8a929c" stroke-width="2"/>
<path d="M1858 1019c8 1 12 6 13 13l-5-2-2 5h-2l1-6-4-3z" fill="#8a929c"/>
<circle cx="1895" cy="1027" r="7.500" fill="#8a929c"/><path d="M1897 1021l-4 6h3l-2 5 5-7h-3z" fill="#1a202a"/>
</svg>
</body></html>
